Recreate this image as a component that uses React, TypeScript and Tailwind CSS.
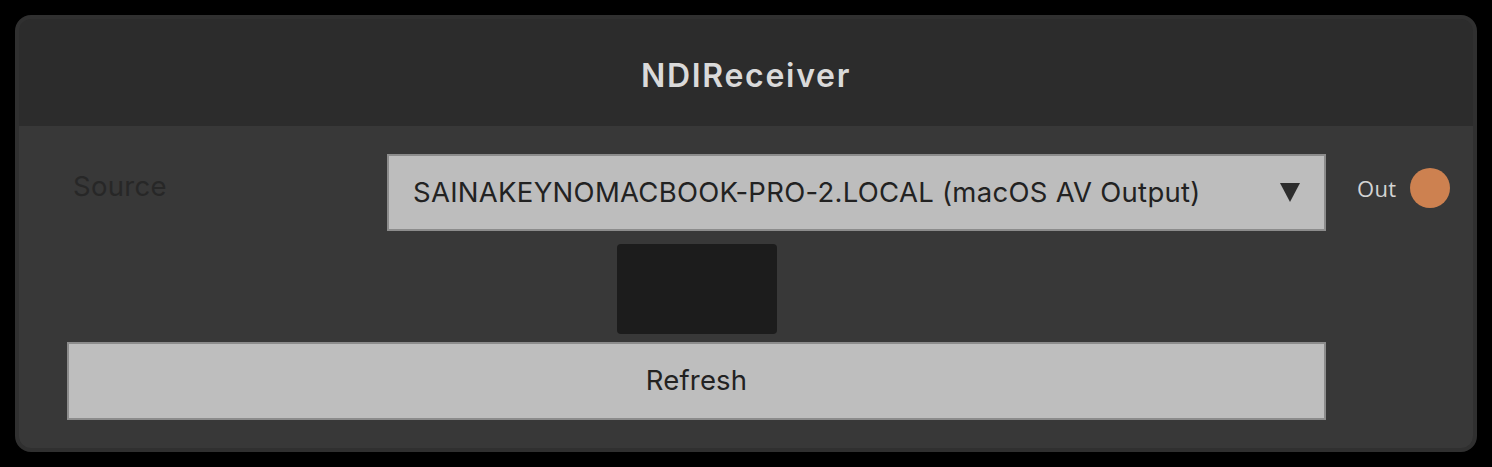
export default function App() {
  return (
    <div className="w-[1492px] h-[467px] bg-black pt-[15px] pl-[15px] font-['Inter',sans-serif]">
      <div className="w-[1462px] h-[437px] rounded-[16px] border-4 border-[#303030] bg-[#2c2c2c] overflow-hidden flex flex-col">
        {/* Header */}
        <div className="h-[107px] shrink-0 flex items-center justify-center pt-[6px]">
          <h1 className="text-[32px] font-semibold text-[#dadada] tracking-[1.7px]">NDIReceiver</h1>
        </div>

        {/* Body */}
        <div className="flex-1 bg-[#383838] flex pl-[48px] pt-[28px]">
          <div className="w-[1259px] flex flex-col">
            <div className="flex">
              <div className="w-[320px] pl-[6px] pt-[12px] leading-[40px] text-[27.5px] text-[#272727] tracking-[0.3px]">
                Source
              </div>
              <div className="w-[939px] h-[77px] bg-[#bdbdbd] border-2 border-[#8c8c8c] flex items-center justify-between pl-[24px] pr-[24px]">
                <span className="text-[27.5px] text-[#222222] tracking-[0.28px] pt-[1px]">
                  SAINAKEYNOMACBOOK-PRO-2.LOCAL (macOS AV Output)
                </span>
                <svg width="20" height="19" viewBox="0 0 20 19">
                  <polygon points="0,0 20,0 10,19" fill="#2d2d2d" />
                </svg>
              </div>
            </div>
            <div className="flex justify-center mt-[13px]">
              <div className="w-[160px] h-[90px] rounded-[4px] bg-[#1c1c1c]" />
            </div>
            <button className="mt-[8px] h-[78px] bg-[#bebebe] border-2 border-[#8c8c8c] text-[27.5px] text-[#222222] tracking-[0.2px]">
              Refresh
            </button>
          </div>
          <div className="flex items-start pl-[31px] pt-[14px]">
            <div className="flex items-center gap-[14px]">
              <span className="text-[22px] text-[#d4d4d4] font-['Open_Sans',sans-serif] tracking-[0.3px]">Out</span>
              <div className="w-[40px] h-[40px] rounded-full bg-[#cd8150]" />
            </div>
          </div>
        </div>
      </div>
    </div>
  )
}
